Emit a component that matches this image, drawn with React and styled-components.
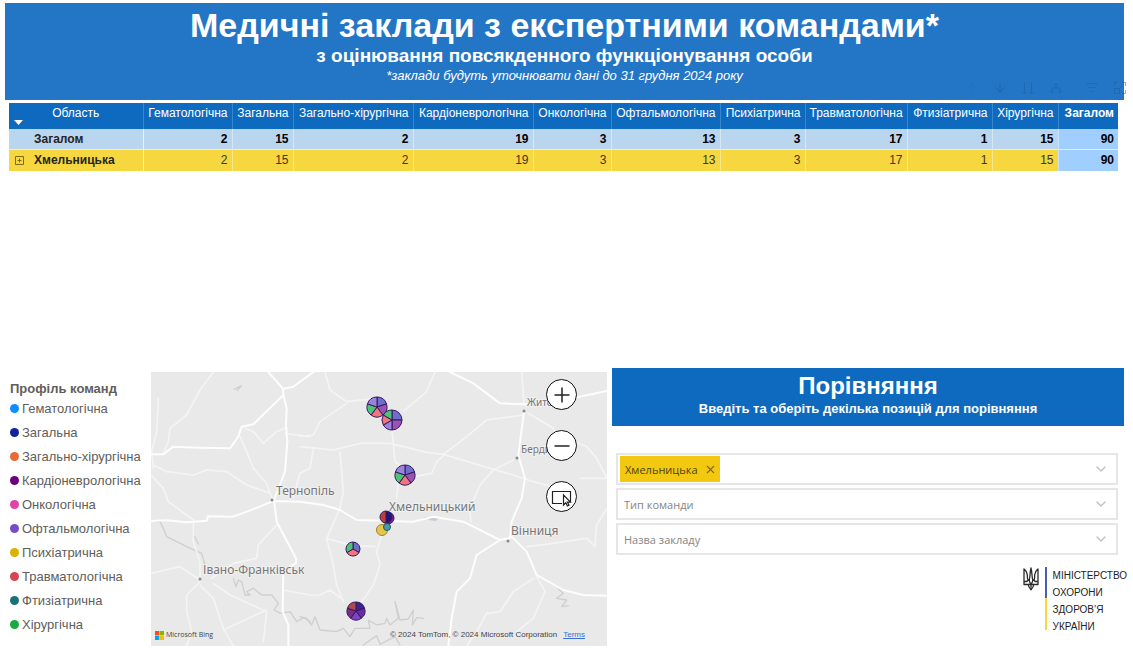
import { useState } from "react";
import styled, { createGlobalStyle } from "styled-components";
import { ArrowUp, ArrowDown, ChevronDown, X } from "lucide-react";

const columns = [
    { name: "Гематологічна", value: 2, width: 89, color: "#118dff" },
    { name: "Загальна", value: 15, width: 61, color: "#12239e" },
    { name: "Загально-хірургічна", value: 2, width: 120, color: "#e66c37" },
    { name: "Кардіоневрологічна", value: 19, width: 120, color: "#6b007b" },
    { name: "Онкологічна", value: 3, width: 78, color: "#e044a7" },
    { name: "Офтальмологічна", value: 13, width: 109, color: "#744ec2" },
    { name: "Психіатрична", value: 3, width: 85, color: "#d9b300" },
    { name: "Травматологічна", value: 17, width: 102, color: "#d64550" },
    { name: "Фтизіатрична", value: 1, width: 85, color: "#197278" },
    { name: "Хірургічна", value: 15, width: 66, color: "#1aab40" },
];

const BLUE = "#6f6fcb";
const PURPLE = "#9a52b4";
const SALMON = "#f2747f";
const GREEN = "#4cc473";
const LILAC = "#9b82dc";

const pies = [
    { x: 226, y: 35, r: 10, slices: [[1, BLUE], [1, PURPLE], [1, SALMON], [1, GREEN], [1, LILAC]] },
    { x: 241, y: 48, r: 10, slices: [[3, BLUE], [3, PURPLE], [2, LILAC], [2, SALMON], [2, GREEN]] },
    { x: 254, y: 103, r: 10, slices: [[1, BLUE], [1, PURPLE], [1, SALMON], [1, GREEN], [1, LILAC]] },
    { x: 237, y: 146, r: 6, slices: [[1, "#7a1ca0"], [1, "#7a1ca0"]] },
    { x: 235, y: 145, r: 6, slices: [[1, "#21157c"], [1, "#bd3f36"]] },
    { x: 202, y: 177, r: 7, slices: [[1, BLUE], [1, SALMON], [1, GREEN]] },
    { x: 205, y: 239, r: 9, slices: [[1, "#3d2493"], [1, "#6c2aa4"], [1, "#7b45c0"], [1, "#7b2c86"], [1, "#b04a48"]] },
];

const majorRoads = [
    "M453 268L490 268L520 245L600 248L690 250L715 215L725 185L760 178L850 90L848 70L805 21",
    "M848 72L880 65L940 21",
    "M850 90L860 130L858 180L862 230L855 320L822 405L830 470L888 580L888 595L850 615L848 740L865 780V843",
    "M453 468L500 466L560 472L620 467L624 454L700 455L780 425L820 408L900 410L970 420L1020 435L1070 465L1240 470L1300 455L1390 470L1500 525L1525 520",
    "M1535 515L1580 560L1610 630L1690 675L1750 690L1821 692",
    "M1500 525L1430 570L1410 640L1370 680L1355 760L1345 843",
    "M1572 140L1555 270L1575 340L1565 400L1535 470L1530 520",
    "M1350 21L1420 55L1500 115L1572 118L1660 112L1821 78",
];

const minorRoads = [
    "M1565 21L1572 118",
    "M975 21L990 75L1040 110L1130 100",
    "M1040 115L960 170L940 210L900 215",
    "M1305 21L1280 80L1210 140",
    "M900 245L1000 255L1080 235L1170 235L1280 262L1330 268L1420 295L1540 330L1600 350L1690 375",
    "M1330 268L1400 215L1460 165L1572 150",
    "M1176 195L1185 290L1200 300L1190 400",
    "M1245 335L1295 325L1310 290L1335 268",
    "M1585 145L1660 190L1690 240",
    "M1690 215L1760 245L1790 280L1821 340H1740",
    "M1540 285L1480 315L1440 360L1410 430L1412 470",
    "M940 250L930 310L900 325L890 360L880 400",
    "M1020 260L1030 380L1020 430L980 520L1000 600L1010 660L1030 710",
    "M980 520L1050 540L1125 545",
    "M1145 510L1130 560L1140 600L1120 660L1085 710",
    "M850 675L930 690L960 690L990 675L1030 705",
    "M1580 545L1660 535L1760 520L1785 545L1790 480L1821 430",
    "M1610 635L1635 680L1600 760L1550 800",
    "M1600 640L1540 680L1500 740L1460 745L1430 800L1400 843",
    "M640 21L600 75L560 150L510 190L505 230L490 265",
    "M475 100L470 200L455 260L460 310",
    "M460 300L500 320L580 330L620 315L680 320L740 360L810 385L820 405",
    "M720 215L740 260L760 310L800 355L810 385",
    "M735 190L760 200L790 235L830 200L855 190",
    "M453 330L490 370L505 410L580 465L580 530L600 590V640",
    "M453 625L540 605L570 625L600 645",
    "M600 650L560 690L560 740L575 800L560 843",
    "M600 660L640 700L670 790L700 843",
    "M640 655L690 690L800 740L790 830",
    "M670 795L800 735",
    "M635 640L700 595L770 580L775 540L830 480",
    "M855 205L930 215",
];

const rivers = [
    "M453 466L480 470L490 490L500 515L560 545L605 565L615 600",
    "M700 640L708 665L715 645L725 650L735 690L750 690L740 680L760 670L785 690L815 690L835 715L822 735L842 745L870 740L890 770L912 758L930 770",
    "M703 73L725 62L712 76",
    "M583 513L595 537",
    "M900 755L920 760L935 780L945 755L960 795L1010 800L1030 790L1050 815L1065 790L1110 790L1105 765L1130 780L1155 775L1160 760L1170 780L1195 760L1185 710L1200 765L1225 762L1240 735L1237 780L1250 758L1270 760",
    "M1090 840L1130 812L1140 838L1185 815L1200 840",
    "M1675 672L1690 685L1670 700L1700 705L1685 725L1705 722",
];

const cities = [
    { name: "Тернопіль", x: 125, y: 123, size: 12, dot: [121, 128] },
    { name: "Хмельницький", x: 238, y: 139, size: 12 },
    { name: "Вінниця", x: 360, y: 163, size: 12, dot: [357, 169] },
    { name: "Івано-Франківськ", x: 52, y: 202, size: 12, dot: [49, 207] },
    { name: "Житомир", x: 376, y: 34, size: 10, dot: [373, 39] },
    { name: "Бердичів", x: 370, y: 81, size: 10, dot: [366, 86] },
];

const Pie = ({ x, y, r, slices }) => {
    const total = slices.reduce((sum, s) => sum + s[0], 0);
    let angle = -Math.PI / 2;
    return (
        <g stroke="#35185f" strokeWidth="1" strokeLinejoin="round">
            {slices.map(([part, color], i) => {
                const start = angle;
                angle += (part / total) * Math.PI * 2;
                const from = `${x + r * Math.cos(start)} ${y + r * Math.sin(start)}`;
                const to = `${x + r * Math.cos(angle)} ${y + r * Math.sin(angle)}`;
                return <path key={i} fill={color} d={`M${x} ${y}L${from}A${r} ${r} 0 0 1 ${to}Z`} />;
            })}
        </g>
    );
};

const MapCanvas = () => (
    <Canvas viewBox="0 0 456 274" preserveAspectRatio="xMidYMid slice">
        <g transform="scale(0.33333) translate(-453 -21)" fill="none" strokeLinejoin="round" strokeLinecap="round">
            <g stroke="#cfcfcf" strokeWidth="4">
                {rivers.map((d) => <path key={d} d={d} />)}
            </g>
            <path d="M1268 456L1316 460L1308 468L1290 466Z" fill="#cbcbcb" />
            <g stroke="#f4f4f4" strokeWidth="5">
                {minorRoads.map((d) => <path key={d} d={d} />)}
            </g>
            <g stroke="#fdfdfd" strokeWidth="6">
                {majorRoads.map((d) => <path key={d} d={d} />)}
            </g>
        </g>
        {cities.map((c) => (
            <g key={c.name}>
                {c.dot && <circle cx={c.dot[0]} cy={c.dot[1]} r="1.5" fill="#8a8a8a" />}
                <CityName x={c.x} y={c.y} fontSize={c.size}>{c.name}</CityName>
            </g>
        ))}
        {pies.map((p) => <Pie key={`${p.x}-${p.y}`} {...p} />)}
        <circle cx="231" cy="158" r="5.5" fill="#e3c650" stroke="#a3841f" />
        <circle cx="236" cy="155" r="3.5" fill="#4c9c9f" stroke="#1d5c66" />
    </Canvas>
);

const App = () => {
    const [region, setRegion] = useState("Хмельницька");
    return (
        <Page>
            <GlobalStyle />
            <Header>
                <Title>Медичні заклади з експертними командами*</Title>
                <Subtitle>з оцінювання повсякденного функціонування особи</Subtitle>
                <Note>*заклади будуть уточнювати дані до 31 грудня 2024 року</Note>
                <Tools>
                    <ToolButton aria-label="Drill up" $dim><ArrowUp size={14} strokeWidth={1} /></ToolButton>
                    <ToolButton aria-label="Drill down"><ArrowDown size={14} strokeWidth={2} /></ToolButton>
                    <ToolButton aria-label="Next level">
                        <svg width="14" height="14" viewBox="0 0 14 14"><path d="M3.5 1V13M1.5 11L3.5 13L5.5 11M10.5 1V13M8.5 11L10.5 13L12.5 11" /></svg>
                    </ToolButton>
                    <ToolButton aria-label="Expand all">
                        <svg width="14" height="14" viewBox="0 0 14 14"><path d="M7 2V7M3 12V7H11V12M1 10L3 12L5 10M9 10L11 12L13 10M5 4L7 2L9 4" /></svg>
                    </ToolButton>
                    <ToolButton aria-label="Filter" $wide>
                        <svg width="14" height="14" viewBox="0 0 14 14"><path d="M1 2.5H13M3 6.5H11M5.5 10.5H8.5" /></svg>
                    </ToolButton>
                    <ToolButton aria-label="Focus mode">
                        <svg width="14" height="14" viewBox="0 0 14 14"><path d="M1.5 5V1.5H5M9 1.5H12.5V5M12.5 9V12.5H9M1.5 7.5H6.5V12.5H1.5ZM7 7L10.5 3.5" /></svg>
                    </ToolButton>
                </Tools>
            </Header>

            <TableArea>
                <Table>
                    <colgroup>
                        <col width="134" />
                        {columns.map((c) => <col key={c.name} width={c.width} />)}
                        <col width="60" />
                    </colgroup>
                    <thead>
                        <tr>
                            <HeadCell $first>
                                Область
                                <SortMark viewBox="0 0 9 5"><path d="M0 0H9L4.5 5Z" fill="#fff" /></SortMark>
                            </HeadCell>
                            {columns.map((c) => <HeadCell key={c.name}>{c.name}</HeadCell>)}
                            <HeadCell $bold>Загалом</HeadCell>
                        </tr>
                    </thead>
                    <tbody>
                        <TotalRow>
                            <RowName>Загалом</RowName>
                            {columns.map((c) => <Cell key={c.name}>{c.value}</Cell>)}
                            <SumCell>90</SumCell>
                        </TotalRow>
                        <RegionRow>
                            <RowName>
                                <Expand aria-label="Expand">
                                    <svg width="9" height="9" viewBox="0 0 9 9" fill="none" stroke="#7d6a1c"><path d="M.5 .5H8.5V8.5H.5ZM2.5 4.5H6.5M4.5 2.5V6.5" /></svg>
                                </Expand>
                                Хмельницька
                            </RowName>
                            {columns.map((c) => <Cell key={c.name}>{c.value}</Cell>)}
                            <SumCell>90</SumCell>
                        </RegionRow>
                    </tbody>
                </Table>
            </TableArea>

            <Bottom>
                <Legend>
                    <LegendTitle>Профіль команд</LegendTitle>
                    <LegendList>
                        {columns.map((c) => (
                            <LegendItem key={c.name}><Dot $color={c.color} />{c.name}</LegendItem>
                        ))}
                    </LegendList>
                </Legend>

                <Map>
                    <MapCanvas />
                    <MapButtons>
                        <RoundButton aria-label="Zoom in">
                            <svg width="30" height="30" viewBox="0 0 30 30"><path d="M15 7.5V22.5M7.5 15H22.5" /></svg>
                        </RoundButton>
                        <RoundButton aria-label="Zoom out">
                            <svg width="30" height="30" viewBox="0 0 30 30"><path d="M7.5 15H22.5" /></svg>
                        </RoundButton>
                        <RoundButton aria-label="Select area">
                            <svg width="30" height="30" viewBox="0 0 30 30"><path strokeWidth="1.2" d="M15 21.5H5.5V9.5H23.5V20" /><path strokeWidth="1.2" fill="#fff" d="M16.5 13V23L18.8 20.8L20.4 24L22 23.2L20.5 20.2H23.5Z" /></svg>
                        </RoundButton>
                    </MapButtons>
                    <MapFooter>
                        <Bing>
                            <svg width="9" height="9" viewBox="0 0 9 9">
                                <path fill="#f25022" d="M0 0H4.3V4.3H0Z" />
                                <path fill="#7fba00" d="M4.7 0H9V4.3H4.7Z" />
                                <path fill="#00a4ef" d="M0 4.7H4.3V9H0Z" />
                                <path fill="#ffb900" d="M4.7 4.7H9V9H4.7Z" />
                            </svg>
                            Microsoft Bing
                        </Bing>
                        <span>
                            © 2024 TomTom, © 2024 Microsoft Corporation
                            <Terms href="#terms">Terms</Terms>
                        </span>
                    </MapFooter>
                </Map>

                <Compare>
                    <CompareHeader>
                        <CompareTitle>Порівняння</CompareTitle>
                        <CompareText>Введіть та оберіть декілька позицій для порівняння</CompareText>
                    </CompareHeader>
                    <Filters>
                        <Field>
                            {region && (
                                <Chip>
                                    {region}
                                    <ChipButton aria-label="Remove" onClick={() => setRegion("")}><X size={13} strokeWidth={2} /></ChipButton>
                                </Chip>
                            )}
                            <Select aria-label="Область"><option></option></Select>
                            <ChevronDown size={16} strokeWidth={2} />
                        </Field>
                        <Field>
                            <Select aria-label="Тип команди"><option>Тип команди</option></Select>
                            <ChevronDown size={16} strokeWidth={2} />
                        </Field>
                        <Field>
                            <Select aria-label="Назва закладу"><option>Назва закладу</option></Select>
                            <ChevronDown size={16} strokeWidth={2} />
                        </Field>
                    </Filters>
                    <Ministry>
                        <svg width="16" height="24" viewBox="0 0 16 24" fill="none" stroke="#2b2b2b" strokeWidth="1.3" strokeLinejoin="round">
                            <path d="M1 2V17.5H5.2C5.4 19.5 6.5 21 8 22.8C9.5 21 10.6 19.5 10.8 17.5H15V2C12 4.5 11.4 7.5 11.6 10.5C11.7 12 11 13 9.8 13C8.8 11 9.3 6 8 1C6.7 6 7.2 11 6.2 13C5 13 4.3 12 4.4 10.5C4.6 7.5 4 4.5 1 2Z" />
                            <path d="M1 14.5H4C4.5 12.8 5.5 13.5 6.2 13C6.5 15.5 7.2 16.5 8 17.5C8.8 16.5 9.5 15.5 9.8 13C10.5 13.5 11.5 12.8 12 14.5H15M5.2 17.5H10.8M8 17.5V22.5" />
                        </svg>
                        <FlagLine />
                        <MinistryName>
                            МІНІСТЕРСТВО<br />ОХОРОНИ<br />ЗДОРОВ’Я<br />УКРАЇНИ
                        </MinistryName>
                    </Ministry>
                </Compare>
            </Bottom>
        </Page>
    );
};

const GlobalStyle = createGlobalStyle`
    * {
        box-sizing: border-box;
    }
    body {
        margin: 0;
        background-color: white;
        font-family: "Liberation Sans", Arial, sans-serif;
    }
    button {
        padding: 0;
        border: none;
        background: none;
        font: inherit;
        cursor: pointer;
    }
`;

const Page = styled.div`
    padding: 3px 6px 5px 5px;
`;

const Header = styled.header`
    position: relative;
    margin-right: 3px;
    min-height: 97px;
    padding-top: 2px;
    background-color: #2376c6;
    color: white;
    text-align: center;
`;

const Title = styled.h1`
    margin: 0;
    font-size: 34px;
    line-height: 40px;
`;

const Subtitle = styled.h2`
    margin: 0;
    font-size: 19px;
    line-height: 22px;
`;

const Note = styled.p`
    margin: 0;
    font-size: 13px;
    line-height: 18px;
    font-style: italic;
`;

const Tools = styled.div`
    position: absolute;
    right: -3px;
    bottom: 5px;
    display: flex;
    gap: 14px;
`;

const ToolButton = styled.button`
    display: flex;
    margin-left: ${(props) => (props.$wide ? "8px" : "0")};
    color: #1c5c9f;
    opacity: ${(props) => (props.$dim ? 0.2 : 0.5)};

    svg {
        fill: none;
        stroke: currentColor;
    }
`;

const TableArea = styled.main`
    min-height: 268px;
    padding: 3px 9px 0 4px;
`;

const Table = styled.table`
    width: 100%;
    table-layout: fixed;
    border-collapse: collapse;
    font-size: 12px;
    line-height: 14px;
`;

const HeadCell = styled.th`
    position: relative;
    height: 26px;
    padding: 3px 4px;
    border-right: 1px solid #3787cf;
    background-color: #0d6abf;
    color: white;
    font-weight: ${(props) => (props.$bold ? "bold" : "normal")};
    text-align: ${(props) => (props.$first ? "center" : "right")};
    vertical-align: top;
    white-space: nowrap;

    &:last-child {
        border-right: none;
    }
`;

const SortMark = styled.svg`
    position: absolute;
    left: 5px;
    bottom: 4px;
    width: 9px;
    height: 5px;
`;

const Cell = styled.td`
    padding: 3px 4px;
    border-right: 1px solid rgba(255, 255, 255, 0.4);
    text-align: right;
`;

const SumCell = styled(Cell)`
    border-right: none;
    background-color: #a0cfff;
    color: black;
    font-weight: bold;
`;

const RowName = styled.th`
    position: relative;
    padding: 3px 4px 3px 25px;
    border-right: 1px solid rgba(255, 255, 255, 0.7);
    color: #252423;
    font-weight: bold;
    text-align: left;
`;

const TotalRow = styled.tr`
    background-color: #bad5ee;
    border-bottom: 1px solid #e4eefa;
    color: black;
    font-weight: bold;
`;

const RegionRow = styled.tr`
    height: 21px;
    background-color: #f6d73f;
    color: #3b3620;
`;

const Expand = styled.button`
    position: absolute;
    left: 6px;
    top: 6px;
    display: flex;
`;

const Bottom = styled.section`
    display: grid;
    grid-template-columns: 146px 456fr 520fr;
    align-items: start;
`;

const Legend = styled.aside`
    padding: 14px 0 0 5px;
    color: #605e5c;
    font-size: 13px;
`;

const LegendTitle = styled.h3`
    margin: 0;
    font-size: 13px;
    line-height: 14px;
`;

const LegendList = styled.ul`
    margin: 0;
    padding: 0;
    list-style: none;
`;

const LegendItem = styled.li`
    display: flex;
    align-items: center;
    gap: 3px;
    height: 24px;
    white-space: nowrap;
`;

const Dot = styled.span`
    width: 9px;
    height: 9px;
    border-radius: 50%;
    background-color: ${(props) => props.$color};
`;

const Map = styled.div`
    position: relative;
    height: 274px;
    margin-top: 4px;
    background-color: #e9e9e9;
    overflow: hidden;
`;

const Canvas = styled.svg`
    display: block;
    width: 100%;
    height: 100%;
`;

const CityName = styled.text`
    fill: #777;
    stroke: #f0f0f0;
    stroke-width: 2px;
    paint-order: stroke;
    font-family: "Noto Sans", sans-serif;
`;

const MapButtons = styled.div`
    position: absolute;
    top: 7px;
    right: 30px;
    display: flex;
    flex-direction: column;
    gap: 20px;
`;

const RoundButton = styled.button`
    display: flex;
    align-items: center;
    justify-content: center;
    width: 31px;
    height: 31px;
    border: 1px solid #111;
    border-radius: 50%;
    background-color: white;

    svg {
        flex: none;
        fill: none;
        stroke: #222;
        stroke-width: 1.5;
    }
`;

const MapFooter = styled.div`
    position: absolute;
    left: 4px;
    right: 22px;
    bottom: 5px;
    display: flex;
    align-items: center;
    justify-content: space-between;
    color: #444;
    font-size: 8px;
    line-height: 12px;
`;

const Bing = styled.span`
    display: flex;
    align-items: center;
    gap: 2px;
    font-family: "Open Sans", sans-serif;
    font-size: 7px;
`;

const Terms = styled.a`
    margin-left: 6px;
    color: #3a6fd0;
`;

const Compare = styled.section`
    padding-left: 5px;
`;

const CompareHeader = styled.header`
    height: 58px;
    margin-right: 3px;
    padding-top: 4px;
    background-color: #0d6abf;
    color: white;
    text-align: center;
`;

const CompareTitle = styled.h2`
    margin: 0;
    font-size: 24px;
    line-height: 28px;
`;

const CompareText = styled.p`
    margin: 0;
    font-size: 13px;
    line-height: 18px;
    font-weight: bold;
`;

const Filters = styled.div`
    display: flex;
    flex-direction: column;
    gap: 3px;
    padding: 27px 9px 0 4px;
`;

const Field = styled.div`
    display: flex;
    align-items: center;
    height: 32px;
    padding: 0 7px 0 2px;
    border: 2px solid #e6e6e6;
    color: #c0c0c0;
`;

const Chip = styled.span`
    display: flex;
    align-items: center;
    gap: 6px;
    height: 26px;
    padding: 0 3px 0 5px;
    background-color: #f2c811;
    color: #4d430f;
    font-family: "Open Sans", sans-serif;
    font-size: 11px;
`;

const ChipButton = styled.button`
    display: flex;
    color: #7a6a16;
`;

const Select = styled.select`
    flex: 1;
    min-width: 0;
    height: 26px;
    padding: 0 4px;
    border: none;
    background: none;
    appearance: none;
    color: #858585;
    font-family: "Open Sans", sans-serif;
    font-size: 11px;
`;

const Ministry = styled.div`
    display: flex;
    justify-content: flex-end;
    gap: 6px;
    padding-top: 12px;
`;

const FlagLine = styled.span`
    width: 2px;
    height: 63px;
    background: linear-gradient(#4a5fae 50%, #f5dc3c 50%);
`;

const MinistryName = styled.p`
    margin: 0;
    color: #222;
    font-size: 10px;
    line-height: 17px;
`;

export default App;
